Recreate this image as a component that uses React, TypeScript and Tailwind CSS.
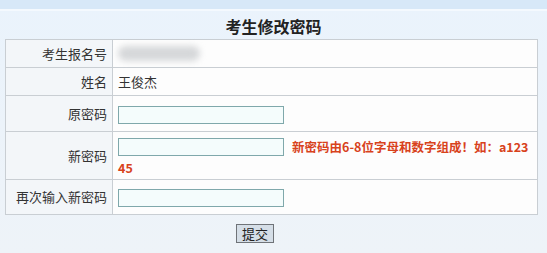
export default function App() {
  const label =
    "w-[107px] border border-[#c9ced3] bg-[#f3f6f9] pr-[5px] text-right align-middle text-[13px] text-[#333]";
  const cell = "border border-[#c9ced3] bg-[#fdfdfd] pl-[5px] align-middle text-[13px] text-[#333]";
  const input =
    "h-[18px] w-[166px] border border-[#7fa8ab] bg-[#f4fcfc] align-middle outline-none";

  return (
    <div
      className="h-[253px] w-[547px] overflow-hidden bg-gradient-to-b from-[#eaf3fc] to-[#eef3f8]"
      style={{ fontFamily: '"Noto Sans CJK SC", "Liberation Sans", sans-serif' }}
    >
      <div className="h-[11px] border-b-2 border-[#f4f9fe] bg-[#d7e8f8]" />
      <div className="flex h-[28px] items-center justify-center pt-[2px] text-[16px] font-bold text-[#222]">
        考生修改密码
      </div>
      <div className="pl-[5px]">
        <table className="w-[533px] border-collapse">
          <tbody>
            <tr className="h-[28px]">
              <td className={label}>考生报名号</td>
              <td className={cell}>
                <div className="h-[15px] w-[82px] rounded-full bg-[#d6d8da] blur-[3px]" />
              </td>
            </tr>
            <tr className="h-[28px]">
              <td className={label}>姓名</td>
              <td className={cell}>王俊杰</td>
            </tr>
            <tr className="h-[36px]">
              <td className={label}>原密码</td>
              <td className={cell}>
                <input type="password" className={input} />
              </td>
            </tr>
            <tr className="h-[48px]">
              <td className={label}>新密码</td>
              <td className={cell}>
                <div className="pt-[3px] leading-[20px]">
                  <input type="password" className={input} />
                  <span className="ml-[8px] align-middle text-[12.5px] font-bold text-[#d8421c]">
                    新密码由6-8位字母和数字组成！如：a123
                    <br />
                    45
                  </span>
                </div>
              </td>
            </tr>
            <tr className="h-[35px]">
              <td className={label}>再次输入新密码</td>
              <td className={cell}>
                <input type="password" className={input} />
              </td>
            </tr>
          </tbody>
        </table>
      </div>
      <div className="mt-[9px] flex pl-[236px]">
        <button className="flex h-[19px] w-[38px] items-center justify-center border border-[#6f7378] bg-[#d5dee7] text-[13px] text-[#222]">
          提交
        </button>
      </div>
    </div>
  );
}
